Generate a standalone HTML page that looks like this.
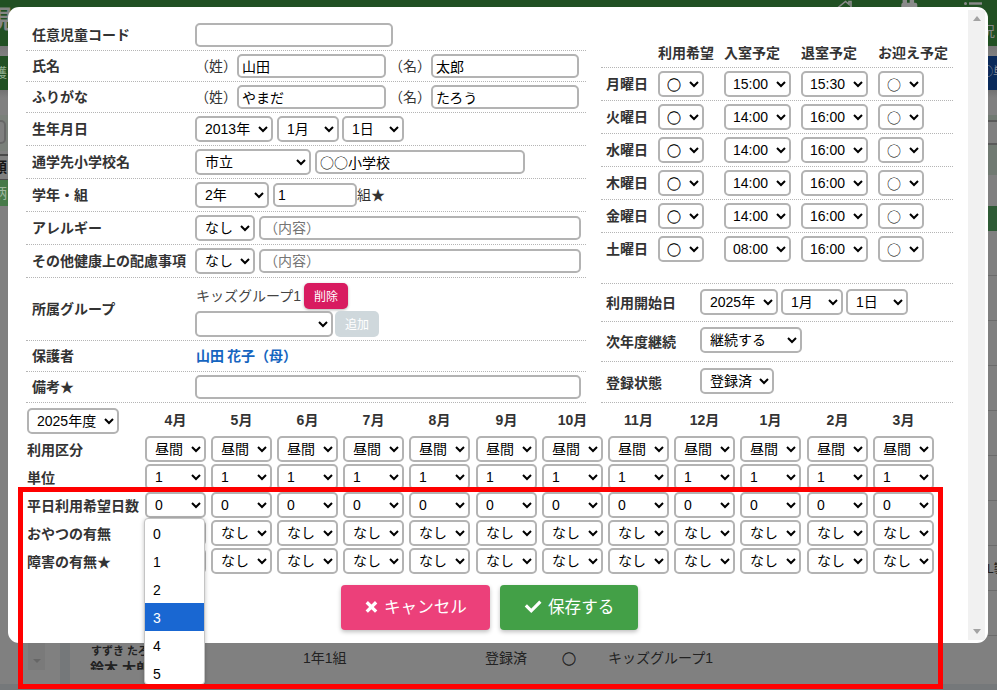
<!DOCTYPE html>
<html lang="ja">
<head>
<meta charset="utf-8">
<title>児童情報編集</title>
<style>
*{box-sizing:border-box;margin:0;padding:0}
html,body{width:997px;height:690px;overflow:hidden}
body{position:relative;background:#808080;font-family:"Liberation Sans","Noto Sans CJK JP",sans-serif;font-size:14px;color:#333;line-height:1.2}
.nt{font-family:"Noto Sans CJK JP",sans-serif}
#bg{position:absolute;left:0;top:0;width:997px;height:690px;overflow:hidden;background:#808080}
#bg .b{position:absolute}
#bg .t{position:absolute;white-space:nowrap;color:#222}
#modal{position:absolute;left:8px;top:7px;width:980px;height:636px;background:#fff;border-radius:11px;overflow:hidden}
#sb{position:absolute;left:960px;top:3px;width:17px;height:630px;background:#f1f1f1}
#sb i{position:absolute;left:5px;width:0;height:0;border-left:4px solid transparent;border-right:4px solid transparent}
#sb i.up{top:6px;border-bottom:5px solid #a3a3a3}
#sb i.dn{bottom:6px;border-top:5px solid #a3a3a3}
#content{position:absolute;left:0;top:0;width:960px;height:636px}
input,select,button{font-family:inherit;font-size:14px;color:#000}
#content select{position:absolute;height:26px;border:2px solid #b3b3b3;border-radius:5px;background:#fff;padding:0 4px}
#content input{position:absolute;height:24px;border:2px solid #b3b3b3;border-radius:5px;background:#fff;padding:0 3px;outline:none}
input.nt,select.nt{font-family:"Noto Sans CJK JP",sans-serif}
input::placeholder{color:#757575;opacity:1}
.dl{position:absolute;height:0;border-top:1px dotted #b5b5b5}
.tx{position:absolute;white-space:nowrap;display:block}
.lbl{font-weight:bold;color:#333}
.par{color:#333}
.gname{color:#444}
.parent{color:#1565c0;font-weight:bold}
.mh{width:61px;text-align:center;font-weight:bold;color:#333}
button{border:none;cursor:pointer}
.bdel,.badd{position:absolute;width:44px;height:26px;border-radius:5px;color:#fff;font-size:12px;line-height:16px;padding:2px 0 0 0}
.bdel{background:#d81b60;box-shadow:0 1px 3px rgba(0,0,0,.3)}
.badd{background:#cfd8dc}
.bcancel,.bsave{position:absolute;height:45px;border-radius:4px;color:#fff;font-size:16.6px;box-shadow:0 2px 4px rgba(0,0,0,.25)}
.bcancel{width:149px;background:#ec407a}
.bsave{width:138px;background:#43a047}
.bcancel span,.bsave span{color:#fff;position:absolute;top:0;line-height:46px;white-space:nowrap}
.bcancel span{left:43px}
.bsave span{left:48px}
.ix{position:absolute;left:24px;top:15px}
.ic{position:absolute;left:24px;top:15px}
#content select.circ1{padding-left:3px;-webkit-text-stroke:.3px #000}
#content select.circ2{padding-left:3px}
#content select.tm{padding-left:3px}
.parent{word-spacing:-1px}
#pop{position:absolute;left:144px;top:518px;width:61px;height:167px;background:#fff;border:1px solid #c4c4c4;border-radius:4px;overflow:hidden;box-shadow:0 1px 4px rgba(0,0,0,.25);color:#000}
#pop .o{height:28px;line-height:31px;padding-left:8px;overflow:hidden}
#pop .hi{background:#1967d2;color:#fff}
#red{position:absolute;left:18px;top:487px;width:925px;height:202px;border:5px solid #ff0000}

</style>
</head>
<body>
<div id="bg">
<!-- dimmed page header -->
<div class="b" style="left:0;top:0;width:997px;height:46px;background:#215023"></div>
<div class="t" style="left:-13px;top:4px;font-size:25px;font-weight:bold;color:#868686;line-height:30px">現</div>
<svg class="b" style="left:836px;top:0" width="150" height="8" viewBox="0 0 150 8"><path d="M2 7.5 L9.5 1.5 L13 4.3 V1.5 H15 V7.5" fill="none" stroke="#8a8a8a" stroke-width="1.6"/><path d="M65.300 7.500 V4.700 Q65.300 2.700 67.300 2.700 H79.300 Q81.300 2.700 81.300 4.700 V7.500 Z M66.600 0 h4.400 v3.500 h-4.400 Z M73.700 0 h4.400 v3.500 h-4.400 Z" fill="#8a8a8a"/><circle cx="129.500" cy="3.500" r="1.500" fill="#8a8a8a"/><rect x="133" y="2.300" width="13" height="2.400" fill="#8a8a8a"/></svg>
<div class="t" style="left:981px;top:21px;font-size:14px;color:#858585;line-height:20px">況</div>
<!-- sub header -->
<div class="b" style="left:0;top:46px;width:997px;height:10px;background:linear-gradient(#767676,#808080)"></div>
<div class="b" style="left:0;top:56px;width:500px;height:34px;background:#215023"></div>
<div class="t" style="left:-6px;top:63px;font-size:13px;color:#8fae8f;line-height:20px">護</div>
<div class="b" style="left:500px;top:56px;width:497px;height:34px;background:#0a2a5a"></div>
<div class="t" style="left:981px;top:62px;font-size:12px;color:#8a8f99;line-height:20px">①単</div>
<div class="b" style="left:0;top:90px;width:997px;height:8px;background:linear-gradient(#727272,#808080)"></div>
<!-- left strip -->
<div class="b" style="left:0;top:115px;width:10px;height:36px;background:#7a807a"></div>
<div class="b" style="left:-20px;top:120px;width:26px;height:24px;border:2px solid #676767;border-radius:5px;background:#808080"></div>
<div class="b" style="left:0;top:154px;width:10px;height:26px;border-top:2px solid #4a4a4a;border-bottom:1px solid #4a4a4a"></div>
<div class="t" style="left:-7px;top:157px;font-size:14px;font-weight:bold;color:#151515;line-height:20px">順</div>
<div class="b" style="left:0;top:180px;width:10px;height:26px;background:#477a49"></div>
<div class="t" style="left:-7px;top:183px;font-size:14px;color:#a0b8a0;line-height:20px">柄</div>
<!-- bottom strip backgrounds -->
<div class="b" style="left:60px;top:600px;width:10px;height:90px;background:#75787a"></div>
<div class="b" style="left:0;top:684px;width:997px;height:6px;background:#75787a"></div>
<div class="b" style="left:-10px;top:600px;width:70px;height:84px;background:#808080;border-radius:0 0 9px 9px"></div>
<div class="b" style="left:70px;top:600px;width:940px;height:84px;background:#808080;border-radius:0 0 9px 9px"></div>
<!-- right strip -->
<div class="b" style="left:985px;top:115px;width:12px;height:6px;background:#717a72"></div>
<div class="b" style="left:985px;top:120px;width:12px;height:2px;background:#5a5a5a"></div>
<div class="b" style="left:985px;top:143px;width:12px;height:2px;background:#5a5a5a"></div>
<div class="b" style="left:985px;top:145px;width:12px;height:30px;background:#717a72"></div>
<div class="b" style="left:985px;top:206px;width:12px;height:25px;background:#2e5a35"></div>
<div class="b" style="left:985px;top:275px;width:12px;height:1px;background:#6c6c6c"></div>
<div class="b" style="left:985px;top:320px;width:12px;height:1px;background:#6c6c6c"></div>
<div class="b" style="left:985px;top:365px;width:12px;height:1px;background:#6c6c6c"></div>
<div class="b" style="left:985px;top:410px;width:12px;height:1px;background:#6c6c6c"></div>
<div class="b" style="left:985px;top:455px;width:12px;height:1px;background:#6c6c6c"></div>
<div class="b" style="left:985px;top:500px;width:12px;height:1px;background:#6c6c6c"></div>
<div class="b" style="left:985px;top:545px;width:12px;height:1px;background:#6c6c6c"></div>
<div class="b" style="left:985px;top:590px;width:12px;height:1px;background:#6c6c6c"></div>
<div class="b" style="left:985px;top:635px;width:12px;height:1px;background:#6c6c6c"></div>
<div class="t" style="left:987px;top:560px;font-size:12px;color:#1e1e1e;line-height:18px">L製</div>
<!-- bottom strip: list row behind the modal -->
<div class="b" style="left:28px;top:620px;width:17px;height:50px;background:#7a7a7a"></div>
<div class="b" style="left:33px;top:659px;width:0;height:0;border-left:4px solid transparent;border-right:4px solid transparent;border-top:4px solid #666"></div>
<div class="b" style="left:80px;top:640px;width:200px;height:30px;overflow:hidden"><div class="t" style="left:11px;top:4px;font-size:11px;font-weight:bold;line-height:14px">すずき たろう</div><div class="t" style="left:10px;top:18px;font-size:14px;font-weight:bold;line-height:20px">鈴木 太郎</div></div>
<div class="t" style="left:303px;top:648px;line-height:20px">1年1組</div>
<div class="t" style="left:485px;top:648px;line-height:20px">登録済</div>
<div class="t nt" style="left:562px;top:648px;line-height:20px;-webkit-text-stroke:.4px #222">○</div>
<div class="t" style="left:608px;top:648px;line-height:20px">キッズグループ1</div>

</div>
<div id="modal">
 <div id="content">
  <div class="lt">
<div class="dl" style="left:18px;top:43px;width:560px"></div>
<span class="tx lbl" style="left:24px;top:13px;height:30px;line-height:30px">任意児童コード</span>
<div class="dl" style="left:18px;top:74px;width:560px"></div>
<span class="tx lbl" style="left:24px;top:44px;height:30px;line-height:30px">氏名</span>
<div class="dl" style="left:18px;top:105px;width:560px"></div>
<span class="tx lbl" style="left:24px;top:75px;height:30px;line-height:30px">ふりがな</span>
<div class="dl" style="left:18px;top:138px;width:560px"></div>
<span class="tx lbl" style="left:24px;top:106px;height:32px;line-height:32px">生年月日</span>
<div class="dl" style="left:18px;top:171px;width:560px"></div>
<span class="tx lbl" style="left:24px;top:139px;height:32px;line-height:32px">通学先小学校名</span>
<div class="dl" style="left:18px;top:204px;width:560px"></div>
<span class="tx lbl" style="left:24px;top:172px;height:32px;line-height:32px">学年・組</span>
<div class="dl" style="left:18px;top:237px;width:560px"></div>
<span class="tx lbl" style="left:24px;top:205px;height:32px;line-height:32px">アレルギー</span>
<div class="dl" style="left:18px;top:270px;width:560px"></div>
<span class="tx lbl" style="left:24px;top:238px;height:32px;line-height:32px">その他健康上の配慮事項</span>
<div class="dl" style="left:18px;top:333px;width:560px"></div>
<span class="tx lbl" style="left:24px;top:271px;height:62px;line-height:62px">所属グループ</span>
<div class="dl" style="left:18px;top:364px;width:560px"></div>
<span class="tx lbl" style="left:24px;top:334px;height:30px;line-height:30px">保護者</span>
<div class="dl" style="left:18px;top:395px;width:560px"></div>
<span class="tx lbl" style="left:24px;top:365px;height:30px;line-height:30px">備考★</span>
<input type="text" style="left:187px;top:16px;width:198px">
<span class="tx par" style="left:187px;top:44px;height:30px;line-height:30px">（姓）</span>
<input type="text" style="left:229px;top:47px;width:149px" value="山田">
<span class="tx par" style="left:381px;top:44px;height:30px;line-height:30px">（名）</span>
<input type="text" style="left:423px;top:47px;width:148px" value="太郎">
<span class="tx par" style="left:187px;top:75px;height:30px;line-height:30px">（姓）</span>
<input type="text" style="left:229px;top:78px;width:149px" value="やまだ">
<span class="tx par" style="left:381px;top:75px;height:30px;line-height:30px">（名）</span>
<input type="text" style="left:423px;top:78px;width:148px" value="たろう">
<select style="left:187px;top:109px;width:78px"><option selected>2013年</option></select>
<select style="left:269px;top:109px;width:62px"><option selected>1月</option></select>
<select style="left:334px;top:109px;width:62px"><option selected>1日</option></select>
<select style="left:187px;top:142px;width:116px"><option selected>市立</option></select>
<input type="text" class="nt" style="left:307px;top:143px;width:210px" value="○○小学校">
<select style="left:187px;top:175px;width:74px"><option selected>2年</option></select>
<input type="text" style="left:265px;top:176px;width:84px" value="1">
<span class="tx par" style="left:349px;top:172px;height:32px;line-height:32px">組★</span>
<select style="left:187px;top:208px;width:60px"><option selected>なし</option></select>
<input type="text" style="left:251px;top:209px;width:322px" placeholder="（内容）">
<select style="left:187px;top:241px;width:60px"><option selected>なし</option></select>
<input type="text" style="left:251px;top:242px;width:322px" placeholder="（内容）">
<span class="tx gname" style="left:188px;top:276px;height:26px;line-height:26px">キッズグループ1</span>
<button class="bdel" style="left:296px;top:276px">削除</button>
<select style="left:187px;top:304px;width:138px"><option selected></option></select>
<button class="badd" style="left:327px;top:304px">追加</button>
<span class="tx parent" style="left:188px;top:334px;height:30px;line-height:30px">山田 花子（母）</span>
<input type="text" style="left:187px;top:368px;width:386px">
  </div>
  <div class="rt">
<div class="dl" style="left:593px;top:60px;width:352px"></div>
<span class="tx lbl" style="left:650px;top:30px;height:32px;line-height:32px">利用希望</span>
<span class="tx lbl" style="left:716px;top:30px;height:32px;line-height:32px">入室予定</span>
<span class="tx lbl" style="left:793px;top:30px;height:32px;line-height:32px">退室予定</span>
<span class="tx lbl" style="left:870px;top:30px;height:32px;line-height:32px">お迎え予定</span>
<div class="dl" style="left:593px;top:93px;width:352px"></div>
<span class="tx lbl" style="left:598px;top:61px;height:32px;line-height:32px">月曜日</span>
<select class="nt circ1" style="left:650px;top:64px;width:46px"><option selected>○</option></select>
<select class="tm" style="left:716px;top:64px;width:67px"><option selected>15:00</option></select>
<select class="tm" style="left:793px;top:64px;width:67px"><option selected>15:30</option></select>
<select class="nt circ2" style="left:870px;top:64px;width:46px"><option selected>○</option></select>
<div class="dl" style="left:593px;top:126px;width:352px"></div>
<span class="tx lbl" style="left:598px;top:94px;height:32px;line-height:32px">火曜日</span>
<select class="nt circ1" style="left:650px;top:97px;width:46px"><option selected>○</option></select>
<select class="tm" style="left:716px;top:97px;width:67px"><option selected>14:00</option></select>
<select class="tm" style="left:793px;top:97px;width:67px"><option selected>16:00</option></select>
<select class="nt circ2" style="left:870px;top:97px;width:46px"><option selected>○</option></select>
<div class="dl" style="left:593px;top:159px;width:352px"></div>
<span class="tx lbl" style="left:598px;top:127px;height:32px;line-height:32px">水曜日</span>
<select class="nt circ1" style="left:650px;top:130px;width:46px"><option selected>○</option></select>
<select class="tm" style="left:716px;top:130px;width:67px"><option selected>14:00</option></select>
<select class="tm" style="left:793px;top:130px;width:67px"><option selected>16:00</option></select>
<select class="nt circ2" style="left:870px;top:130px;width:46px"><option selected>○</option></select>
<div class="dl" style="left:593px;top:192px;width:352px"></div>
<span class="tx lbl" style="left:598px;top:160px;height:32px;line-height:32px">木曜日</span>
<select class="nt circ1" style="left:650px;top:163px;width:46px"><option selected>○</option></select>
<select class="tm" style="left:716px;top:163px;width:67px"><option selected>14:00</option></select>
<select class="tm" style="left:793px;top:163px;width:67px"><option selected>16:00</option></select>
<select class="nt circ2" style="left:870px;top:163px;width:46px"><option selected>○</option></select>
<div class="dl" style="left:593px;top:225px;width:352px"></div>
<span class="tx lbl" style="left:598px;top:193px;height:32px;line-height:32px">金曜日</span>
<select class="nt circ1" style="left:650px;top:196px;width:46px"><option selected>○</option></select>
<select class="tm" style="left:716px;top:196px;width:67px"><option selected>14:00</option></select>
<select class="tm" style="left:793px;top:196px;width:67px"><option selected>16:00</option></select>
<select class="nt circ2" style="left:870px;top:196px;width:46px"><option selected>○</option></select>
<span class="tx lbl" style="left:598px;top:226px;height:32px;line-height:32px">土曜日</span>
<select class="nt circ1" style="left:650px;top:229px;width:46px"><option selected>○</option></select>
<select class="tm" style="left:716px;top:229px;width:67px"><option selected>08:00</option></select>
<select class="tm" style="left:793px;top:229px;width:67px"><option selected>16:00</option></select>
<select class="nt circ2" style="left:870px;top:229px;width:46px"><option selected>○</option></select>
<div class="dl" style="left:593px;top:276px;width:352px"></div>
<div class="dl" style="left:593px;top:314px;width:352px"></div>
<div class="dl" style="left:593px;top:354px;width:352px"></div>
<div class="dl" style="left:593px;top:395px;width:352px"></div>
<span class="tx lbl" style="left:598px;top:278px;height:37px;line-height:37px">利用開始日</span>
<select style="left:692px;top:282px;width:78px"><option selected>2025年</option></select>
<select style="left:773px;top:282px;width:62px"><option selected>1月</option></select>
<select style="left:838px;top:282px;width:62px"><option selected>1日</option></select>
<span class="tx lbl" style="left:598px;top:316px;height:39px;line-height:39px">次年度継続</span>
<select style="left:692px;top:320px;width:102px"><option selected>継続する</option></select>
<span class="tx lbl" style="left:598px;top:356px;height:40px;line-height:40px">登録状態</span>
<select style="left:692px;top:361px;width:74px"><option selected>登録済</option></select>
  </div>
  <div class="mt">
<select style="left:19px;top:401px;width:92px"><option selected>2025年度</option></select>
<span class="tx mh" style="left:137px;top:400px;height:26px;line-height:26px">4月</span>
<span class="tx mh" style="left:203px;top:400px;height:26px;line-height:26px">5月</span>
<span class="tx mh" style="left:269px;top:400px;height:26px;line-height:26px">6月</span>
<span class="tx mh" style="left:335px;top:400px;height:26px;line-height:26px">7月</span>
<span class="tx mh" style="left:401px;top:400px;height:26px;line-height:26px">8月</span>
<span class="tx mh" style="left:468px;top:400px;height:26px;line-height:26px">9月</span>
<span class="tx mh" style="left:534px;top:400px;height:26px;line-height:26px">10月</span>
<span class="tx mh" style="left:600px;top:400px;height:26px;line-height:26px">11月</span>
<span class="tx mh" style="left:666px;top:400px;height:26px;line-height:26px">12月</span>
<span class="tx mh" style="left:732px;top:400px;height:26px;line-height:26px">1月</span>
<span class="tx mh" style="left:799px;top:400px;height:26px;line-height:26px">2月</span>
<span class="tx mh" style="left:865px;top:400px;height:26px;line-height:26px">3月</span>
<span class="tx lbl" style="left:19px;top:430px;height:26px;line-height:26px">利用区分</span>
<select class="ms" style="left:137px;top:429px;width:61px"><option selected>昼間</option></select>
<select class="ms" style="left:203px;top:429px;width:61px"><option selected>昼間</option></select>
<select class="ms" style="left:269px;top:429px;width:61px"><option selected>昼間</option></select>
<select class="ms" style="left:335px;top:429px;width:61px"><option selected>昼間</option></select>
<select class="ms" style="left:401px;top:429px;width:61px"><option selected>昼間</option></select>
<select class="ms" style="left:468px;top:429px;width:61px"><option selected>昼間</option></select>
<select class="ms" style="left:534px;top:429px;width:61px"><option selected>昼間</option></select>
<select class="ms" style="left:600px;top:429px;width:61px"><option selected>昼間</option></select>
<select class="ms" style="left:666px;top:429px;width:61px"><option selected>昼間</option></select>
<select class="ms" style="left:732px;top:429px;width:61px"><option selected>昼間</option></select>
<select class="ms" style="left:799px;top:429px;width:61px"><option selected>昼間</option></select>
<select class="ms" style="left:865px;top:429px;width:61px"><option selected>昼間</option></select>
<span class="tx lbl" style="left:19px;top:458px;height:26px;line-height:26px">単位</span>
<select class="ms" style="left:137px;top:457px;width:61px"><option selected>1</option></select>
<select class="ms" style="left:203px;top:457px;width:61px"><option selected>1</option></select>
<select class="ms" style="left:269px;top:457px;width:61px"><option selected>1</option></select>
<select class="ms" style="left:335px;top:457px;width:61px"><option selected>1</option></select>
<select class="ms" style="left:401px;top:457px;width:61px"><option selected>1</option></select>
<select class="ms" style="left:468px;top:457px;width:61px"><option selected>1</option></select>
<select class="ms" style="left:534px;top:457px;width:61px"><option selected>1</option></select>
<select class="ms" style="left:600px;top:457px;width:61px"><option selected>1</option></select>
<select class="ms" style="left:666px;top:457px;width:61px"><option selected>1</option></select>
<select class="ms" style="left:732px;top:457px;width:61px"><option selected>1</option></select>
<select class="ms" style="left:799px;top:457px;width:61px"><option selected>1</option></select>
<select class="ms" style="left:865px;top:457px;width:61px"><option selected>1</option></select>
<span class="tx lbl" style="left:19px;top:486px;height:26px;line-height:26px">平日利用希望日数</span>
<select class="ms" style="left:137px;top:485px;width:61px"><option selected>0</option></select>
<select class="ms" style="left:203px;top:485px;width:61px"><option selected>0</option></select>
<select class="ms" style="left:269px;top:485px;width:61px"><option selected>0</option></select>
<select class="ms" style="left:335px;top:485px;width:61px"><option selected>0</option></select>
<select class="ms" style="left:401px;top:485px;width:61px"><option selected>0</option></select>
<select class="ms" style="left:468px;top:485px;width:61px"><option selected>0</option></select>
<select class="ms" style="left:534px;top:485px;width:61px"><option selected>0</option></select>
<select class="ms" style="left:600px;top:485px;width:61px"><option selected>0</option></select>
<select class="ms" style="left:666px;top:485px;width:61px"><option selected>0</option></select>
<select class="ms" style="left:732px;top:485px;width:61px"><option selected>0</option></select>
<select class="ms" style="left:799px;top:485px;width:61px"><option selected>0</option></select>
<select class="ms" style="left:865px;top:485px;width:61px"><option selected>0</option></select>
<span class="tx lbl" style="left:19px;top:514px;height:26px;line-height:26px">おやつの有無</span>
<select class="ms" style="left:137px;top:513px;width:61px"><option selected>なし</option></select>
<select class="ms" style="left:203px;top:513px;width:61px"><option selected>なし</option></select>
<select class="ms" style="left:269px;top:513px;width:61px"><option selected>なし</option></select>
<select class="ms" style="left:335px;top:513px;width:61px"><option selected>なし</option></select>
<select class="ms" style="left:401px;top:513px;width:61px"><option selected>なし</option></select>
<select class="ms" style="left:468px;top:513px;width:61px"><option selected>なし</option></select>
<select class="ms" style="left:534px;top:513px;width:61px"><option selected>なし</option></select>
<select class="ms" style="left:600px;top:513px;width:61px"><option selected>なし</option></select>
<select class="ms" style="left:666px;top:513px;width:61px"><option selected>なし</option></select>
<select class="ms" style="left:732px;top:513px;width:61px"><option selected>なし</option></select>
<select class="ms" style="left:799px;top:513px;width:61px"><option selected>なし</option></select>
<select class="ms" style="left:865px;top:513px;width:61px"><option selected>なし</option></select>
<span class="tx lbl" style="left:19px;top:542px;height:26px;line-height:26px">障害の有無★</span>
<select class="ms" style="left:137px;top:541px;width:61px"><option selected>なし</option></select>
<select class="ms" style="left:203px;top:541px;width:61px"><option selected>なし</option></select>
<select class="ms" style="left:269px;top:541px;width:61px"><option selected>なし</option></select>
<select class="ms" style="left:335px;top:541px;width:61px"><option selected>なし</option></select>
<select class="ms" style="left:401px;top:541px;width:61px"><option selected>なし</option></select>
<select class="ms" style="left:468px;top:541px;width:61px"><option selected>なし</option></select>
<select class="ms" style="left:534px;top:541px;width:61px"><option selected>なし</option></select>
<select class="ms" style="left:600px;top:541px;width:61px"><option selected>なし</option></select>
<select class="ms" style="left:666px;top:541px;width:61px"><option selected>なし</option></select>
<select class="ms" style="left:732px;top:541px;width:61px"><option selected>なし</option></select>
<select class="ms" style="left:799px;top:541px;width:61px"><option selected>なし</option></select>
<select class="ms" style="left:865px;top:541px;width:61px"><option selected>なし</option></select>
  </div>
  <button class="bcancel" style="left:333px;top:578px"><svg class="ix" width="14" height="14" viewBox="0 0 14 14"><path d="M1.75 2.25 L11.15 11.65 M11.15 2.25 L1.75 11.65" stroke="#fff" stroke-width="3.3" fill="none"/></svg><span>キャンセル</span></button><button class="bsave" style="left:492px;top:578px"><svg class="ic" width="18" height="14" viewBox="0 0 18 14"><path d="M1.83 5.41 L7.26 10.84 L16.37 1.73" stroke="#fff" stroke-width="3.2" stroke-linejoin="miter" fill="none"/></svg><span>保存する</span></button>
 </div>
 <div id="sb"><i class="up"></i><i class="dn"></i></div>
</div>
<div id="pop"><div class="o">0</div><div class="o">1</div><div class="o">2</div><div class="o hi">3</div><div class="o">4</div><div class="o">5</div></div>
<div id="red"></div>
</body>
</html>
